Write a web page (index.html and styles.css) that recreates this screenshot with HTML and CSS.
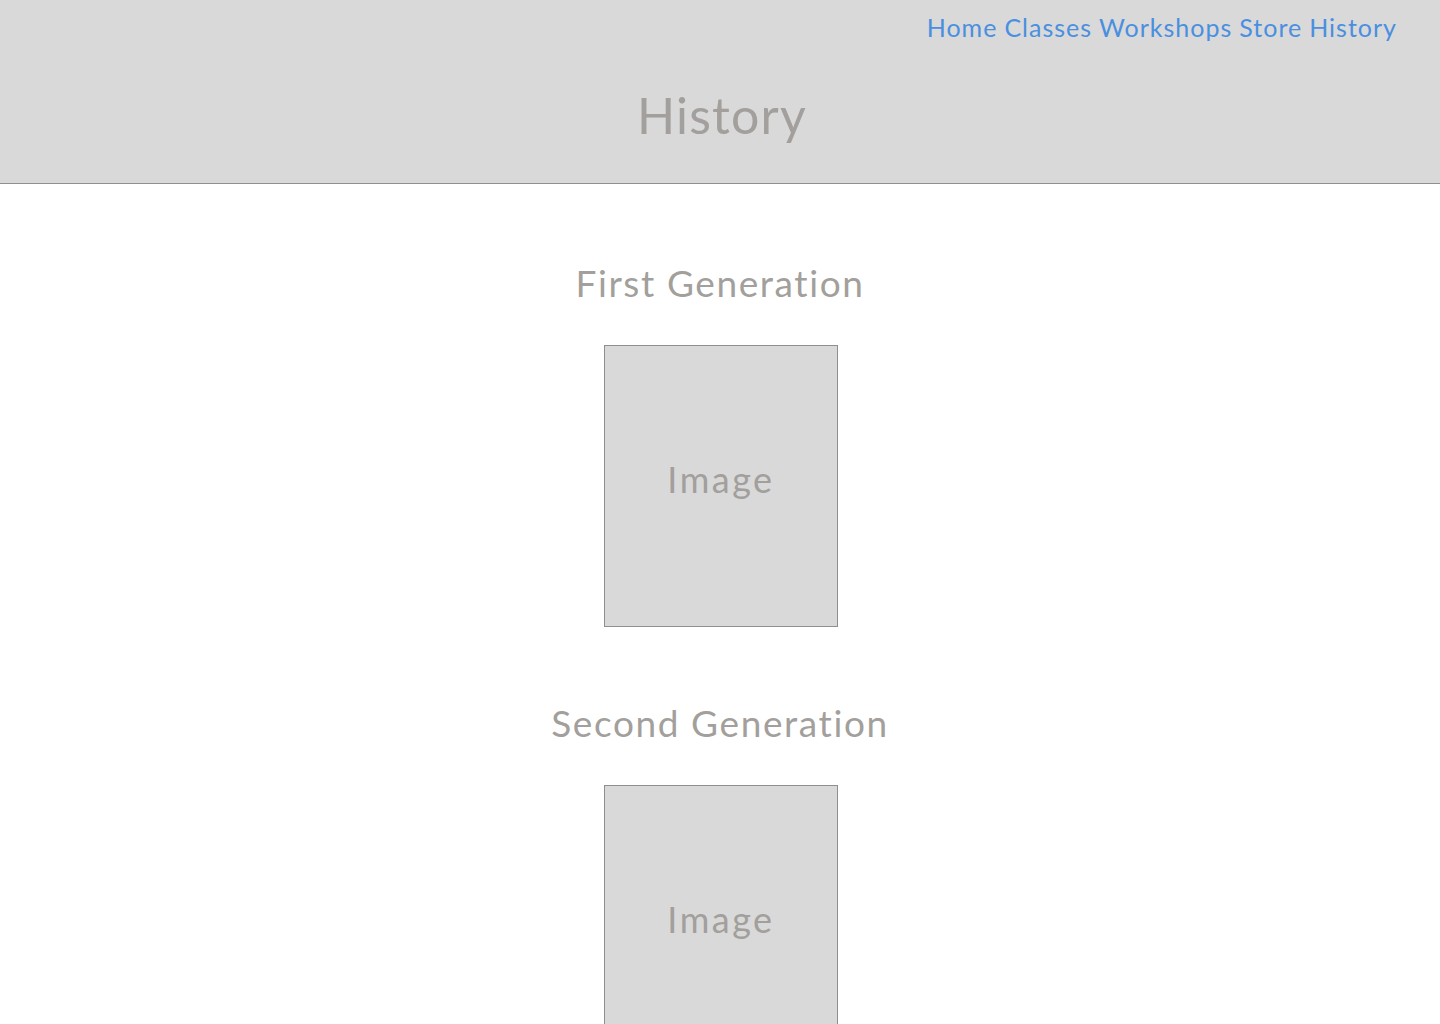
FILE: index.html
```html
<!DOCTYPE html>
<html lang="en">
<head>
<meta charset="utf-8">
<title>History</title>
<link rel="stylesheet" href="styles.css">
</head>
<body>
<header class="site-header">
  <nav class="nav">
    <a href="#">Home</a>
    <a href="#">Classes</a>
    <a href="#">Workshops</a>
    <a href="#">Store</a>
    <a href="#">History</a>
  </nav>
  <h1 class="page-title">History</h1>
</header>
<main class="content">
  <section class="generation">
    <h2 class="gen-title">First Generation</h2>
    <div class="image-box">Image</div>
  </section>
  <section class="generation">
    <h2 class="gen-title">Second Generation</h2>
    <div class="image-box">Image</div>
  </section>
</main>
</body>
</html>
```
FILE: styles.css
```css
* { box-sizing: border-box; }
body {
  margin: 0;
  font-family: Lato, "Open Sans", sans-serif;
  color: #a29f9c;
  background: #fff;
}
.site-header {
  background: #d9d9d9;
  border-bottom: 1px solid #8f8f8f;
  height: 184px;
  padding: 11px 43px 0;
  display: flex;
  flex-direction: column;
}
.nav {
  display: flex;
  justify-content: flex-end;
  gap: 7px;
  font-size: 25px;
  line-height: 32px;
  letter-spacing: 1px;
}
.nav a {
  color: #4a8fe0;
  text-decoration: none;
}
.page-title {
  margin: 42px 0 0;
  padding-left: 4px;
  text-align: center;
  font-weight: 400;
  font-size: 50px;
  line-height: 60px;
  letter-spacing: 1.2px;
  color: #a29f9c;
}
.content {
  display: flex;
  flex-direction: column;
  align-items: center;
  padding-top: 77px;
  gap: 74px;
}
.generation {
  display: flex;
  flex-direction: column;
  align-items: center;
}
.gen-title {
  margin: 0 0 40px;
  font-weight: 400;
  font-size: 37px;
  line-height: 44px;
  letter-spacing: 1.6px;
}
.image-box {
  width: 234px;
  height: 282px;
  background: #d9d9d9;
  border: 1px solid #8f8f8f;
  display: flex;
  align-items: center;
  justify-content: center;
  padding-bottom: 14px;
  font-size: 36px;
  letter-spacing: 2.5px;
  margin-left: 2px;
}
```
